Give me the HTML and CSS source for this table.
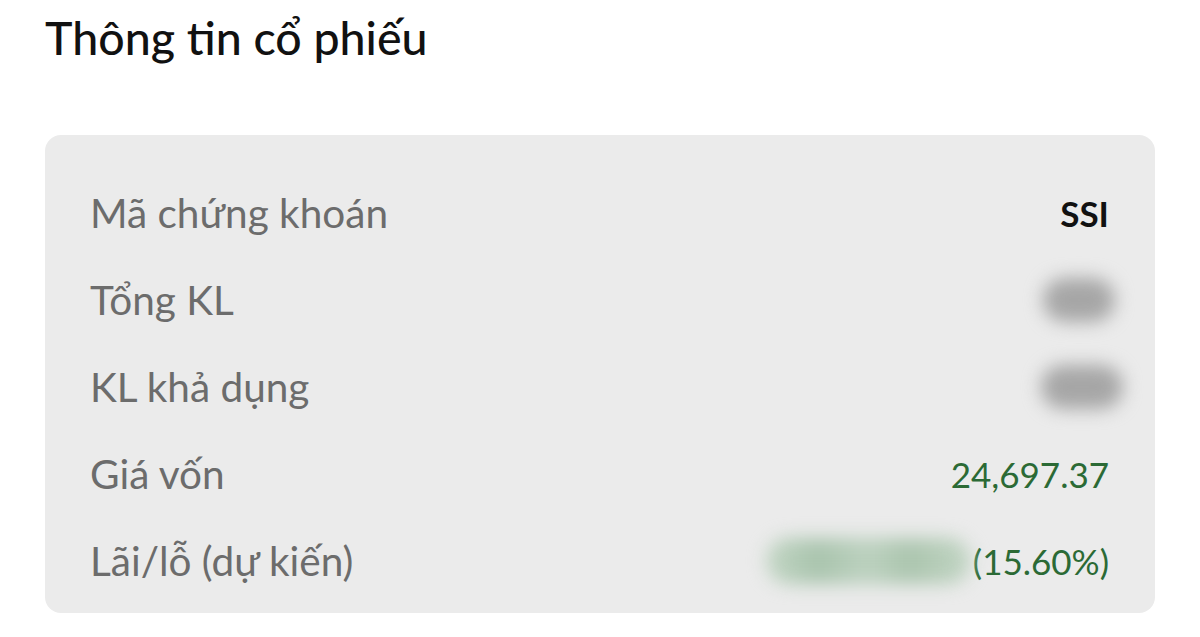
FILE: index.html
```html
<!DOCTYPE html>
<html lang="vi">
<head>
<meta charset="utf-8">
<link rel="stylesheet" href="styles.css">
</head>
<body>
<main class="page">
  <h1 class="title">Thông tin cổ phiếu</h1>
  <section class="card">
    <div class="row"><span class="label">Mã chứng khoán</span><span class="value strong">SSI</span></div>
    <div class="row"><span class="label">Tổng KL</span><span class="value"><span class="blur blur-gray small"></span></span></div>
    <div class="row"><span class="label">KL khả dụng</span><span class="value"><span class="blur blur-gray wide"></span></span></div>
    <div class="row"><span class="label">Giá vốn</span><span class="value green">24,697.37</span></div>
    <div class="row"><span class="label">Lãi/lỗ (dự kiến)</span><span class="value green"><span class="blur blur-green long"></span>(15.60%)</span></div>
  </section>
</main>
</body>
</html>
```
FILE: styles.css
```css
html, body { margin: 0; padding: 0; background: #ffffff; }
body { font-family: "Lato", "Noto Sans", sans-serif; }
.page { padding: 0 45px; }
.title {
  margin: 0;
  padding-top: 10px;
  height: 135px;
  box-sizing: border-box;
  font-size: 46.5px;
  font-weight: 500;
  color: #111;
  line-height: 54px;
}
.card {
  background: #ebebeb;
  border-radius: 16px;
  padding: 34px 46px 18px 45px;
  height: 478px;
  box-sizing: border-box;
}
.row {
  display: flex;
  justify-content: space-between;
  align-items: center;
  height: 87px;
}
.label { font-size: 40.5px; color: #6c6c6c; }
.value { font-size: 35px; display: flex; align-items: center; color: #111; }
.strong { font-weight: 700; }
.green { color: #2b6a35; }
.blur { display: inline-block; border-radius: 30px; filter: blur(9px); }
.blur-gray { background: #a6a6a6; height: 44px; }
.small { width: 72px; margin-right: -6px; }
.wide { width: 82px; margin-right: -14px; }
.blur-green { background: linear-gradient(90deg, #c3d6c5, #a9c4ad 25%, #bcd1bf 50%, #abc5ae 70%, #c2d5c4); height: 46px; width: 205px; margin-right: 2px; }
```
